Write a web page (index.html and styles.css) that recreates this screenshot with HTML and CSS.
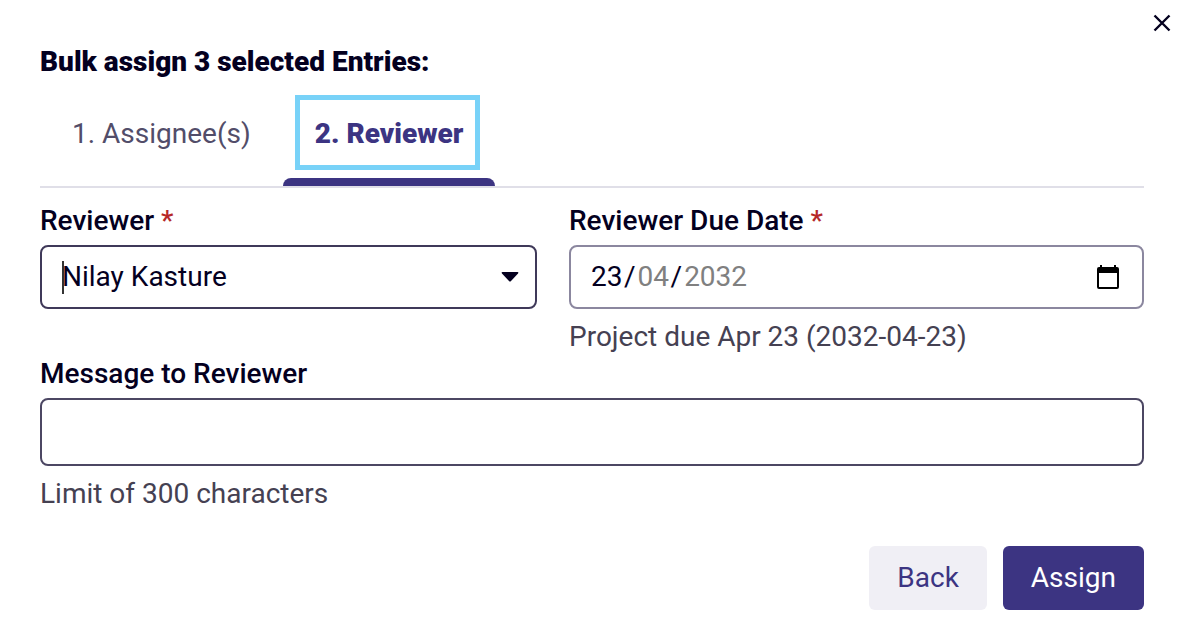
FILE: index.html
```html
<!DOCTYPE html>
<html lang="en">
<head>
  <meta charset="UTF-8" />
  <meta name="viewport" content="width=device-width, initial-scale=1.0" />
  <title>Bulk assign</title>
  <link rel="stylesheet" href="styles.css">
</head>
<body>
  <main class="dialog">
    <button type="button" class="close" aria-label="Close">
      <svg viewBox="0 0 18 18" width="18" height="18" aria-hidden="true">
        <path d="M1.5 1.5L16.5 16.5M16.5 1.5L1.5 16.5" />
      </svg>
    </button>

    <h1>Bulk assign 3 selected Entries:</h1>

    <div class="tabs" role="tablist">
      <button type="button" class="tab" role="tab" aria-selected="false">
        <span class="tab-label">1. Assignee(s)</span>
      </button>
      <button type="button" class="tab active" role="tab" aria-selected="true">
        <span class="tab-label">2. Reviewer</span>
      </button>
    </div>

    <form>
      <div class="row">
        <div class="field">
          <label for="reviewer">Reviewer <span class="required">*</span></label>
          <div class="select-wrap">
            <select id="reviewer" class="control" required>
              <option>Nilay Kasture</option>
            </select>
            <span class="caret"></span>
            <svg class="arrow" viewBox="0 0 18 10" width="18" height="10" aria-hidden="true">
              <path d="M1.5 0H16.5Q18 0.3 17 1.5L10 9Q9 10 8 9L1 1.5Q0 0.3 1.5 0Z" />
            </svg>
          </div>
        </div>

        <div class="field">
          <label for="due-day">Reviewer Due Date <span class="required">*</span></label>
          <div class="control date" role="group" aria-label="Reviewer Due Date">
            <input id="due-day" class="part day" type="text" inputmode="numeric" maxlength="2" value="23" required>
            <span>/</span>
            <input class="part" type="text" inputmode="numeric" maxlength="2" value="04" aria-label="Month">
            <span>/</span>
            <input class="part year" type="text" inputmode="numeric" maxlength="4" value="2032" aria-label="Year">
            <button type="button" class="calendar" aria-label="Show calendar">
              <svg viewBox="0 0 22 24" width="22" height="24" aria-hidden="true">
                <path fill-rule="evenodd" d="M3 0H5V2H17V0H19V2H20Q22 2 22 4V22Q22 24 20 24H2Q0 24 0 22V4Q0 2 2 2H3ZM2 8V22H20V8Z" />
              </svg>
            </button>
          </div>
          <p class="hint">Project due Apr 23 (2032-04-23)</p>
        </div>
      </div>

      <div class="field">
        <label for="message">Message to Reviewer</label>
        <input id="message" class="control message" type="text" maxlength="300">
        <p class="hint">Limit of 300 characters</p>
      </div>

      <div class="actions">
        <button type="button" class="btn">Back</button>
        <button type="submit" class="btn primary">Assign</button>
      </div>
    </form>
  </main>
</body>
</html>
```
FILE: styles.css
```css
:root {
  --text: #04001f;
  --muted: #454152;
  --tab-text: #524d69;
  --accent: #3c3482;
  --focus: #78d2f8;
  --required: #b62828;
}

* {
  margin: 0;
  padding: 0;
  box-sizing: border-box;
}

body {
  font-family: Roboto, "Liberation Sans", sans-serif;
  font-size: 28px;
  line-height: 34px;
  color: var(--text);
  background: #fff;
}

button,
input,
select {
  font: inherit;
  color: inherit;
  border: none;
  background: none;
}

.dialog {
  position: relative;
  padding: 45px 44px 32px 40px;
}

.close {
  position: absolute;
  top: 8px;
  right: 11px;
  display: flex;
  padding: 6px;
}

.close svg {
  fill: none;
  stroke: var(--text);
  stroke-width: 2.4;
}

h1 {
  font-size: 28px;
  font-weight: 900;
  line-height: 34px;
}

/* tabs */
.tabs {
  display: flex;
  margin-bottom: 16px;
  border-bottom: 2px solid #e0dfe8;
}

.tab {
  padding: 16px 15px 8px 12px;
  color: var(--tab-text);
  border-bottom: 8px solid transparent;
}

.tab-label {
  display: block;
  padding: 17px 12px 14px 15px;
  border: 5px solid transparent;
}

.tab.active {
  position: relative;
  font-weight: 900;
  color: var(--accent);
}

.tab.active .tab-label {
  border-color: var(--focus);
}

.tab.active::after {
  content: "";
  position: absolute;
  left: 0;
  right: 0;
  bottom: -8px;
  height: 8px;
  border-radius: 8px 8px 0 0;
  background: var(--accent);
}

/* form */
.row {
  display: grid;
  grid-template-columns: 497fr 575fr;
  gap: 32px;
  margin-bottom: 3px;
}

label {
  display: block;
  margin-bottom: 7px;
  font-weight: 500;
}

.required {
  color: var(--required);
}

.control {
  display: block;
  width: 100%;
  height: 64px;
  padding: 0 20px;
  border: 2px solid #3f3959;
  border-radius: 8px;
  background: #fff;
}

.control.message {
  height: 68px;
  border-color: #4c4763;
}

.select-wrap {
  position: relative;
}

select.control {
  appearance: none;
}

.caret {
  position: absolute;
  top: 16px;
  left: 22px;
  width: 2px;
  height: 33px;
  background: #333;
}

.arrow {
  position: absolute;
  top: 27px;
  right: 18px;
  fill: var(--text);
}

.control.date {
  display: flex;
  align-items: center;
  gap: 2px;
  border-color: #8b879f;
}

.part {
  width: 31px;
  color: #808080;
}

.part.day {
  color: var(--text);
}

.part.year {
  width: 72px;
}

.calendar {
  display: flex;
  margin-left: auto;
  padding: 2px 3px;
}

.hint {
  margin-top: 11px;
  color: var(--muted);
}

.actions {
  display: flex;
  justify-content: flex-end;
  gap: 16px;
  margin-top: 35px;
}

.btn {
  height: 64px;
  padding: 0 28px;
  color: var(--accent);
  border-radius: 6px;
  background: #f0eff5;
}

.btn.primary {
  color: #fff;
  background: var(--accent);
}
```
